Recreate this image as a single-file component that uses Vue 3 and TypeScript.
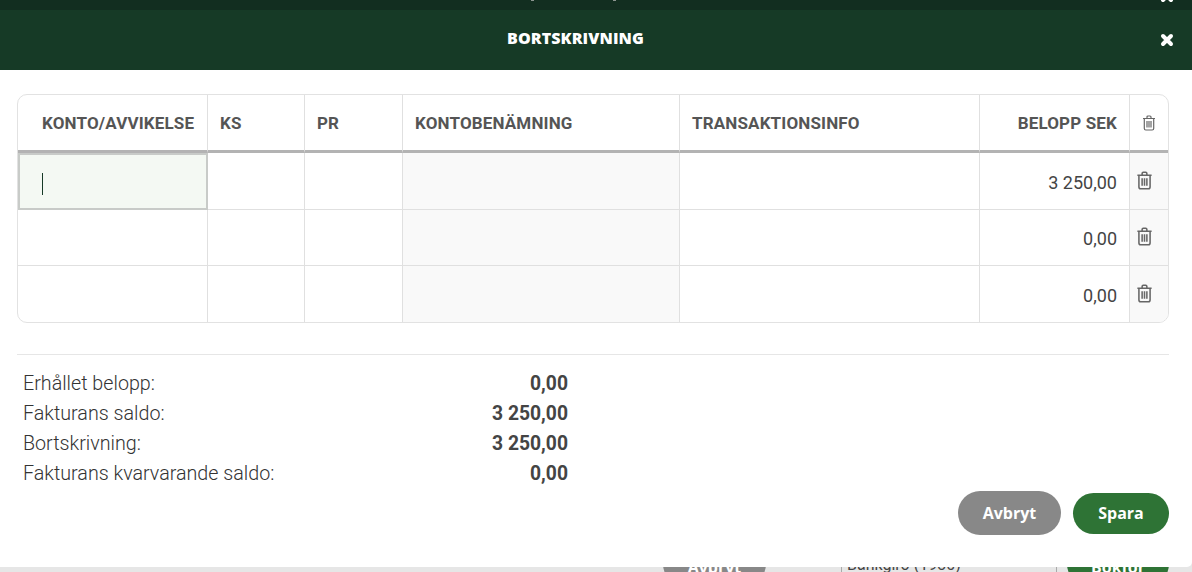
<template>
  <div class="page">
    <!-- page behind the dialog, only the edges show -->
    <div class="backdrop">
      <div class="back-top">
        <i class="mark" style="left: 531px"></i>
        <i class="mark" style="left: 613px"></i>
        <svg class="close back-close" viewBox="0 0 14 14" aria-hidden="true">
          <path d="M3 3 11 11M11 3 3 11" />
        </svg>
      </div>
      <div class="back-bottom">
        <span class="back-btn grey">Avbryt</span>
        <span class="back-select">Bankgiro (1930)</span>
        <span class="back-btn green">Bokför</span>
      </div>
    </div>

    <div class="dialog">
      <header class="dialog-head">
        <h1>BORTSKRIVNING</h1>
        <svg class="close" viewBox="0 0 14 14" aria-hidden="true">
          <path d="M3 3 11 11M11 3 3 11" />
        </svg>
      </header>

      <div class="dialog-body">
        <div class="table-wrap">
          <table>
            <colgroup>
              <col v-for="w in colWidths" :key="w.id" :style="{ width: w.px + 'px' }" />
            </colgroup>
            <thead>
              <tr>
                <th class="first">KONTO/AVVIKELSE</th>
                <th>KS</th>
                <th>PR</th>
                <th>KONTOBENÄMNING</th>
                <th>TRANSAKTIONSINFO</th>
                <th class="num">BELOPP SEK</th>
                <th class="trash-cell">
                  <svg class="trash small" viewBox="0 0 14 16" aria-hidden="true">
                    <path d="M1 3.500h12M5 3.500V2q0-1 1-1h2q1 0 1 1v1.500M2.300 3.500v10q0 1.500 1.500 1.500h6.400q1.500 0 1.500-1.500v-10M5 6v6.500M7 6v6.500M9 6v6.500" />
                  </svg>
                </th>
              </tr>
            </thead>
            <tbody>
              <tr v-for="(row, i) in rows" :key="i">
                <td :class="{ focused: i === 0 }"><span v-if="i === 0" class="caret"></span></td>
                <td></td>
                <td></td>
                <td class="shaded"></td>
                <td></td>
                <td class="num">{{ row }}</td>
                <td class="shaded trash-cell">
                  <svg class="trash" viewBox="0 0 14 16" aria-hidden="true">
                    <path d="M1 3.500h12M5 3.500V2q0-1 1-1h2q1 0 1 1v1.500M2.300 3.500v10q0 1.500 1.500 1.500h6.400q1.500 0 1.500-1.500v-10M5 6v6.500M7 6v6.500M9 6v6.500" />
                  </svg>
                </td>
              </tr>
            </tbody>
          </table>
        </div>

        <div class="summary">
          <div v-for="s in summary" :key="s.label" class="summary-row">
            <span>{{ s.label }}</span>
            <strong>{{ s.value }}</strong>
          </div>
        </div>

        <div class="actions">
          <button type="button" class="btn cancel">Avbryt</button>
          <button type="button" class="btn save">Spara</button>
        </div>
      </div>
    </div>
  </div>
</template>

<script setup lang="ts">
interface SummaryRow {
  label: string;
  value: string;
}

const colWidths = [
  { id: 'konto', px: 190 },
  { id: 'ks', px: 97 },
  { id: 'pr', px: 98 },
  { id: 'namn', px: 277 },
  { id: 'info', px: 300 },
  { id: 'belopp', px: 150 },
  { id: 'del', px: 39 }
];

const rows: string[] = ['3 250,00', '0,00', '0,00'];

const summary: SummaryRow[] = [
  { label: 'Erhållet belopp:', value: '0,00' },
  { label: 'Fakturans saldo:', value: '3 250,00' },
  { label: 'Bortskrivning:', value: '3 250,00' },
  { label: 'Fakturans kvarvarande saldo:', value: '0,00' }
];
</script>

<style>
html,
body {
  margin: 0;
  overflow: hidden;
}
</style>

<style scoped>
.page {
  position: relative;
  width: 1192px;
  height: 572px;
  overflow: hidden;
  background: #e6e6e6;
  font-family: Roboto, "Liberation Sans", sans-serif;
  color: #444;
}

.backdrop {
  display: flex;
  flex-direction: column;
  justify-content: space-between;
  height: 100%;
}

.back-top {
  position: relative;
  height: 10px;
  background: #122e20;
  overflow: hidden;
}

.mark {
  position: absolute;
  top: 0;
  width: 3px;
  height: 1px;
  background: #8c9590;
}

.back-top .back-close {
  left: 1160px;
  top: -11px;
}

.back-bottom {
  position: relative;
  height: 5px;
}

.back-btn {
  position: absolute;
  top: -25px;
  height: 44px;
  line-height: 50px;
  border-radius: 22px;
  text-align: center;
  color: #fff;
  font-family: "Open Sans", Roboto, sans-serif;
  font-weight: 700;
  font-size: 16px;
  overflow: hidden;
}

.back-btn.grey {
  left: 663px;
  width: 103px;
  background: #888;
}

.back-btn.green {
  left: 1067px;
  width: 102px;
  background: #2e7335;
}

.back-select {
  position: absolute;
  left: 841px;
  top: -12px;
  width: 216px;
  height: 30px;
  padding-left: 5px;
  box-sizing: border-box;
  border-left: 1px solid #aaa;
  border-right: 1px solid #aaa;
  color: #444;
  font-size: 16px;
}

.dialog {
  position: absolute;
  left: 0;
  top: 10px;
  width: 1192px;
  height: 557px;
  background: #fff;
  border-radius: 0 0 5px 0;
  display: flex;
  flex-direction: column;
}

.dialog-head {
  position: relative;
  height: 60px;
  flex: none;
  background: #163a26;
  display: flex;
  align-items: center;
  justify-content: center;
  padding-right: 41px;
}

.dialog-head h1 {
  margin: -4px 0 0;
  color: #fff;
  font-family: "Open Sans", Roboto, sans-serif;
  font-size: 16px;
  font-weight: 800;
  letter-spacing: 0.1px;
}

.close {
  position: absolute;
  left: 1160px;
  top: 23px;
  width: 14px;
  height: 14px;
  fill: none;
  stroke: #fff;
  stroke-width: 4;
  stroke-linecap: round;
}

.dialog-body {
  flex: 1;
  padding: 24px 23px 0 17px;
  display: flex;
  flex-direction: column;
}

.table-wrap {
  width: 1152px;
  height: 229px;
  flex: none;
  box-sizing: border-box;
  border: 1px solid #e2e2e2;
  border-radius: 10px;
  overflow: hidden;
}

table {
  width: 1151px;
  table-layout: fixed;
  border-collapse: separate;
  border-spacing: 0;
}

th {
  height: 58px;
  padding: 0 0 0 12px;
  box-sizing: border-box;
  text-align: left;
  font-size: 17px;
  font-weight: 700;
  letter-spacing: 0.15px;
  color: #555;
  border-right: 1px solid #e0e0e0;
  border-bottom: 3px solid #b3b3b3;
}

th.first {
  padding-left: 24px;
}

th.num {
  padding-right: 12px;
}

td {
  height: 56px;
  padding: 2px 12px 0;
  box-sizing: border-box;
  font-size: 18px;
  font-weight: 400;
  color: #444;
  border-right: 1px solid #e0e0e0;
  border-bottom: 1px solid #e0e0e0;
}

tbody tr:first-child td {
  height: 57px;
}

tbody tr:last-child td {
  border-bottom: none;
}

th:last-child,
td:last-child {
  border-right: none;
}

.num {
  text-align: right;
}

.shaded {
  background: #f9f9f9;
}

th.trash-cell,
td.trash-cell {
  padding: 0;
  text-align: center;
}

td.focused {
  background: #f4f9f3;
  border: 2px solid #c8cbc8;
  padding: 4px 0 0 22px;
}

.caret {
  display: block;
  width: 1px;
  height: 22px;
  background: #163a26;
}

.trash {
  display: block;
  margin: -2px auto 0 6px;
  width: 17px;
  height: 19px;
  fill: none;
  stroke: #666;
  stroke-width: 1.300;
}

.trash.small {
  margin: 0 auto 0 12px;
  width: 14px;
  height: 16px;
  stroke-width: 1.200;
}

.summary {
  margin-top: 31px;
  padding-top: 14px;
  border-top: 1px solid #e6e6e6;
}

.summary-row {
  display: flex;
  justify-content: space-between;
  width: 545px;
  margin-left: 6px;
  height: 30px;
  line-height: 30px;
  font-size: 19.700px;
  font-weight: 300;
  color: #333;
}

.summary-row strong {
  font-size: 19.300px;
  font-weight: 700;
  color: #444;
}

.actions {
  display: flex;
  justify-content: flex-end;
  align-items: center;
  gap: 12px;
  margin-top: 2px;
}

.btn {
  border: none;
  border-radius: 22px;
  color: #fff;
  font-family: "Open Sans", Roboto, sans-serif;
  font-size: 16px;
  font-weight: 700;
  padding: 0;
}

.cancel {
  width: 103px;
  height: 44px;
  background: #888;
}

.save {
  width: 96px;
  height: 41px;
  background: #2e7335;
}
</style>
